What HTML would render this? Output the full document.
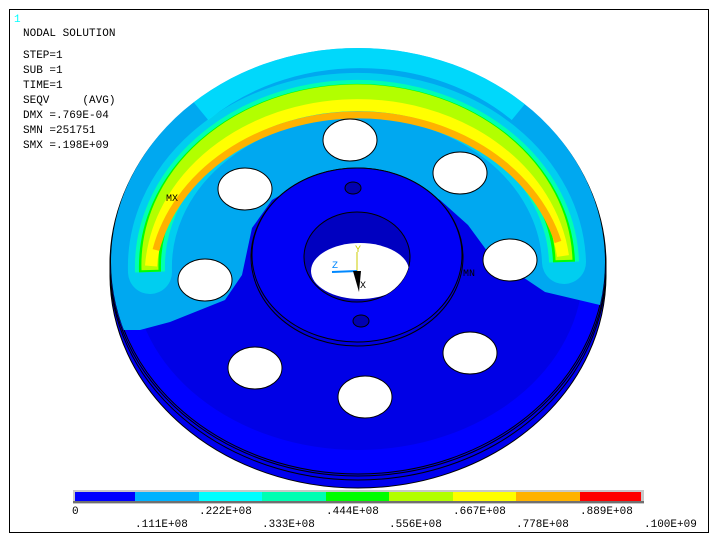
<!DOCTYPE html>
<html><head><style>
html,body{margin:0;padding:0;background:#fff;width:720px;height:546px;overflow:hidden}
</style></head><body>
<svg width="720" height="546" xmlns="http://www.w3.org/2000/svg" font-family="Liberation Mono, monospace">
<rect x="9.5" y="9.5" width="699" height="523" fill="#fff" stroke="#000"/>
<defs>
<clipPath id="face"><ellipse cx="358" cy="262" rx="247" ry="214"/></clipPath>
<clipPath id="hole"><ellipse cx="357" cy="257" rx="53" ry="45"/></clipPath>
</defs>
<ellipse cx="358" cy="275" rx="248" ry="213" fill="#0000ee" stroke="#000"/>
<ellipse cx="358" cy="268" rx="248" ry="212" fill="none" stroke="#000"/>
<ellipse cx="358" cy="264" rx="248" ry="212" fill="#0000f0" stroke="#000"/>
<ellipse cx="358" cy="262" rx="247" ry="212" fill="#0000ff" stroke="#000"/>
<ellipse cx="358" cy="270" rx="225" ry="180" fill="#0000e6"/>
<g clip-path="url(#face)">
<path d="M100 330 L100 40 L620 40 L620 300 L600 305 L545 292 L490 255 L468 225 L440 200 L400 178 L357 168 L310 178 L272 200 L252 228 L242 275 L225 300 L170 322 L140 330 Z" fill="#00a8f0"/>
<path d="M200 110 A230 195 0 0 1 520 110" fill="none" stroke="#00e8ff" stroke-width="26" opacity="0.75"/>
<path d="M150 272 A207 172 0 0 1 564 262" fill="none" stroke="#00e8f0" stroke-width="44" stroke-linecap="round" opacity="0.6"/>
<path d="M150 272 A207 172 0 0 1 564 262" fill="none" stroke="#00ffb2" stroke-width="30"/>
<path d="M150 272 A207 172 0 0 1 564 262" fill="none" stroke="#00ff00" stroke-width="22"/>
<path d="M150 270 A207 172 0 0 1 564 260" fill="none" stroke="#b2ff00" stroke-width="17"/>
<path d="M151 266 A207 172 0 0 1 563 256" fill="none" stroke="#ffff00" stroke-width="12"/>
<path d="M156 250 A207 172 0 0 1 558 242" fill="none" stroke="#ffb200" stroke-width="7"/>
</g>
<ellipse cx="357" cy="257" rx="106" ry="89" fill="#0000e0" stroke="#000"/>
<ellipse cx="357" cy="255" rx="105" ry="87" fill="#0000f5" stroke="#000"/>
<ellipse cx="357" cy="257" rx="53" ry="45" fill="#0000c0" stroke="#000"/>
<ellipse cx="360" cy="271" rx="49" ry="28" fill="#fff" clip-path="url(#hole)"/>
<ellipse cx="353" cy="188" rx="8" ry="6" fill="#0000b0" stroke="#000"/>
<ellipse cx="361" cy="321" rx="8" ry="6" fill="#0000b0" stroke="#000"/>
<g stroke="#000" fill="#fff">
<ellipse cx="350" cy="140" rx="27" ry="21"/>
<ellipse cx="460" cy="173" rx="27" ry="21"/>
<ellipse cx="510" cy="260" rx="27" ry="21"/>
<ellipse cx="245" cy="189" rx="27" ry="21"/>
<ellipse cx="205" cy="280" rx="27" ry="21"/>
<ellipse cx="255" cy="368" rx="27" ry="21"/>
<ellipse cx="470" cy="353" rx="27" ry="21"/>
<ellipse cx="365" cy="397" rx="27" ry="21"/>
</g>
<line x1="357" y1="271" x2="357" y2="252" stroke="#cc0"/>
<line x1="357" y1="271" x2="332" y2="272" stroke="#08f" stroke-width="2"/>
<path d="M353 271 L361 271 L359 292 Z" fill="#000"/>
<text x="355" y="252" font-size="10" fill="#cc0">Y</text>
<text x="332" y="268" font-size="10" fill="#08f">Z</text>
<text x="360" y="288" font-size="10" fill="#000">X</text>
<text x="166" y="201" font-size="10">MX</text>
<text x="463" y="276" font-size="10">MN</text>
<text x="14" y="22" font-size="11" fill="#0ff">1</text>
<g font-size="11" fill="#000">
<text x="23" y="36">NODAL SOLUTION</text>
<text x="23" y="58">STEP=1</text>
<text x="23" y="73">SUB =1</text>
<text x="23" y="88">TIME=1</text>
<text x="23" y="103" xml:space="preserve">SEQV     (AVG)</text>
<text x="23" y="118">DMX =.769E-04</text>
<text x="23" y="133">SMN =251751</text>
<text x="23" y="148">SMX =.198E+09</text>
</g>
<rect x="73" y="490" width="571" height="14" fill="#c8c8c8"/>
<rect x="75" y="492" width="60" height="9" fill="#0000ff"/>
<rect x="135" y="492" width="64" height="9" fill="#00b2ff"/>
<rect x="199" y="492" width="63" height="9" fill="#00ffff"/>
<rect x="262" y="492" width="64" height="9" fill="#00ffb2"/>
<rect x="326" y="492" width="63" height="9" fill="#00ff00"/>
<rect x="389" y="492" width="64" height="9" fill="#b2ff00"/>
<rect x="453" y="492" width="63" height="9" fill="#ffff00"/>
<rect x="516" y="492" width="64" height="9" fill="#ffb200"/>
<rect x="580" y="492" width="61" height="9" fill="#ff0000"/>
<rect x="73" y="501" width="571" height="2" fill="#707070"/>
<g font-size="11" fill="#000">
<text x="72" y="514">0</text>
<text x="199" y="514">.222E+08</text>
<text x="326" y="514">.444E+08</text>
<text x="453" y="514">.667E+08</text>
<text x="580" y="514">.889E+08</text>
<text x="135" y="527">.111E+08</text>
<text x="262" y="527">.333E+08</text>
<text x="389" y="527">.556E+08</text>
<text x="516" y="527">.778E+08</text>
<text x="644" y="527">.100E+09</text>
</g>
</svg>
</body></html>
